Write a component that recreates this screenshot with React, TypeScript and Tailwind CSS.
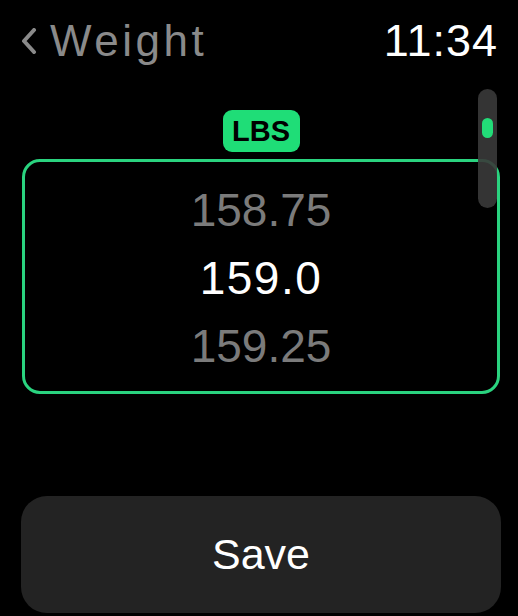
import React from "react";

const values = [
  { label: "158.75", active: false },
  { label: "159.0", active: true },
  { label: "159.25", active: false },
];

const App: React.FC = () => {
  return (
    <div
      className="relative w-[518px] h-[616px] bg-black overflow-hidden flex flex-col"
      style={{ fontFamily: '"Liberation Sans", Arial, sans-serif' }}
    >
      {/* header */}
      <div className="flex flex-row items-center justify-between pt-[18px] pl-[21px] pr-[20px]">
        <div className="flex flex-row items-center text-[#8a8a8a]">
          <svg width="16" height="26" viewBox="0 0 16 26" className="mr-[13px]">
            <polyline
              points="13,2 3,13 13,24"
              fill="none"
              stroke="#8a8a8a"
              strokeWidth="4"
              strokeLinecap="round"
              strokeLinejoin="round"
            />
          </svg>
          <span className="text-[44px] leading-none tracking-[3.5px]">Weight</span>
        </div>
        <span className="text-[45px] leading-none text-white tracking-[1px]">11:34</span>
      </div>

      {/* scroll indicator */}
      <div className="absolute left-[478px] top-[89px] w-[19px] h-[119px] rounded-full bg-[#3a3a3a]/90 flex justify-center">
        <div className="mt-[29px] w-[11px] h-[20px] rounded-full bg-[#22dc78]" />
      </div>

      {/* unit badge */}
      <div className="ml-[22px] w-[478px] flex justify-center mt-[47px]">
        <div className="w-[77px] h-[42px] rounded-[9px] bg-[#1fdd77] flex items-center justify-center">
          <span className="text-[29px] font-bold leading-none text-black">LBS</span>
        </div>
      </div>

      {/* picker */}
      <div className="ml-[22px] mt-[7px] w-[478px] h-[235px] border-[3.5px] border-[#2ad37f] rounded-[18px] flex flex-col items-center pt-[14px]">
        {values.map((v) => (
          <div
            key={v.label}
            className={
              v.active
                ? "h-[68px] leading-[68px] text-[46px] text-white tracking-[1.5px]"
                : "h-[68px] leading-[68px] text-[46px] text-[#7b7b7b]"
            }
          >
            {v.label}
          </div>
        ))}
      </div>

      {/* save */}
      <button className="ml-[21px] mt-[102px] w-[480px] h-[117px] rounded-[26px] bg-[#232323] flex items-center justify-center">
        <span className="text-[43px] leading-none text-white">Save</span>
      </button>
    </div>
  );
};

export default App;
